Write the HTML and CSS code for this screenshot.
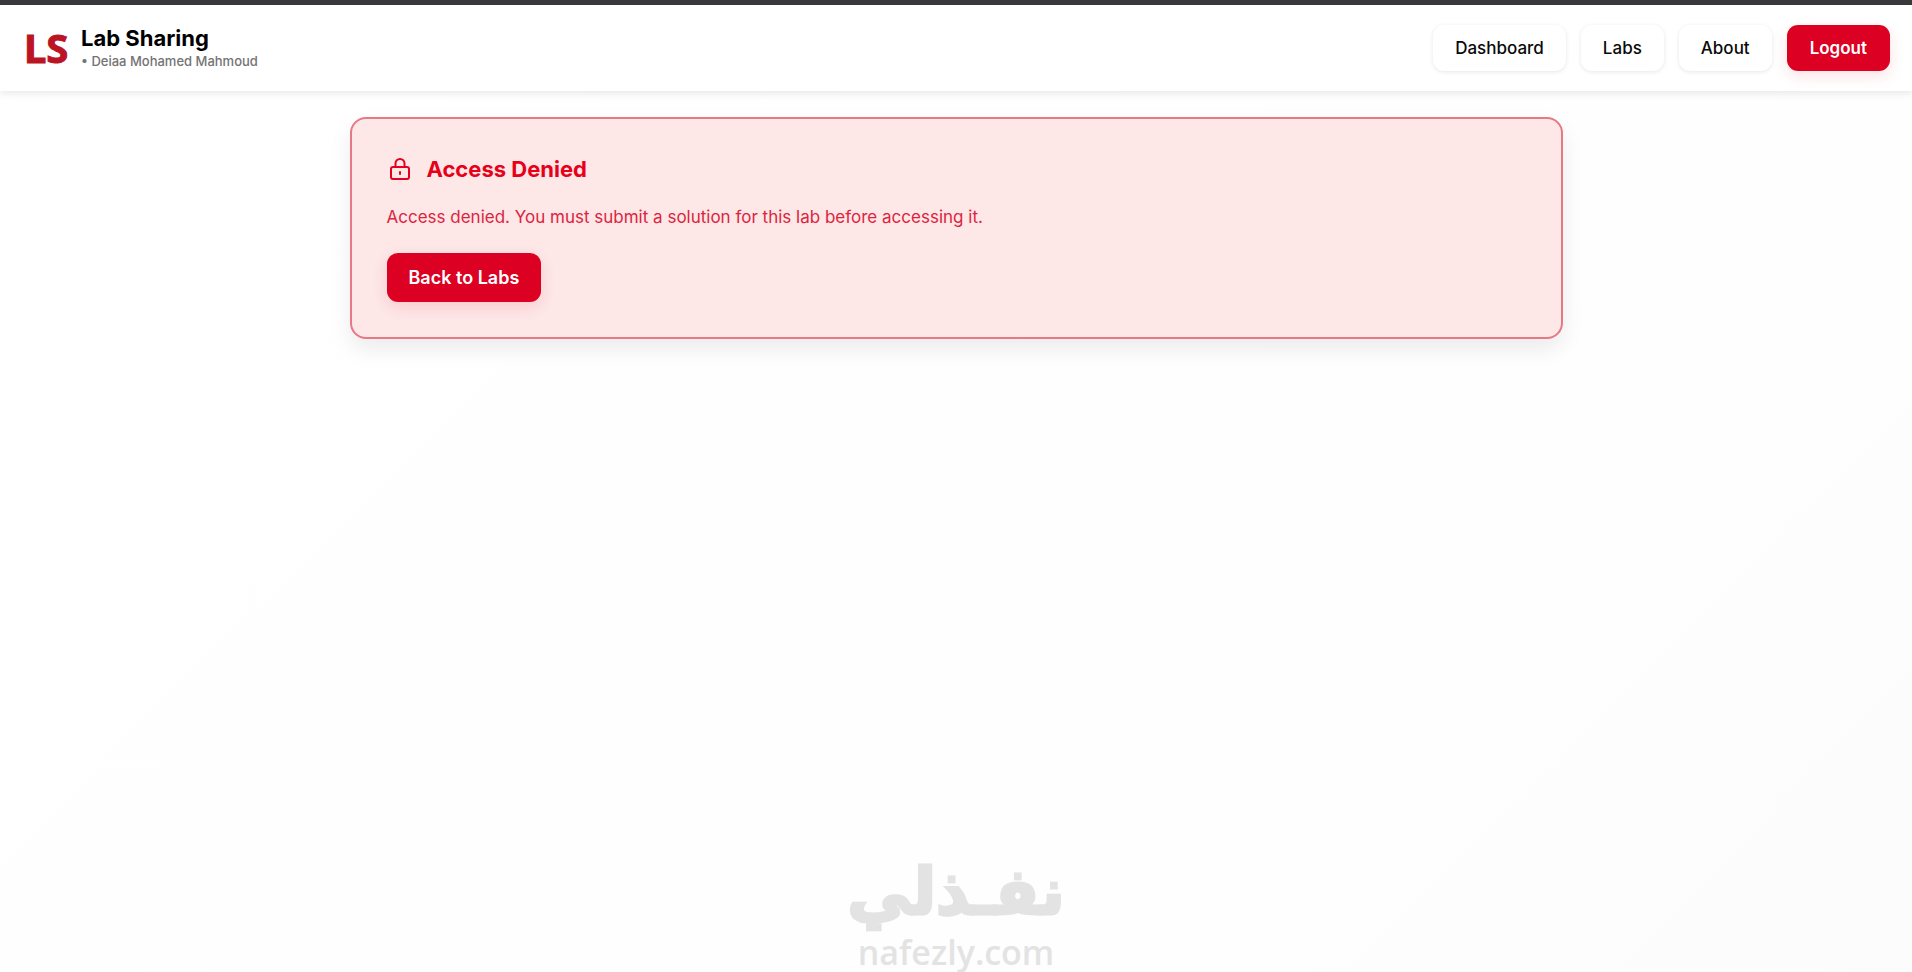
FILE: index.html
```html
<!DOCTYPE html>
<html lang="en">
<head>
    <meta charset="UTF-8">
    <meta name="viewport" content="width=device-width, initial-scale=1.0">
    <title>Lab Sharing</title>
    <link rel="stylesheet" href="styles.css">
</head>
<body>
    <header class="navbar">
        <div class="brand">
            <svg class="brand-logo" viewBox="0 0 42 46" role="img" aria-label="Lab Sharing logo">
                <text x="-3" y="38">LS</text>
            </svg>
            <div>
                <h1 class="brand-title">Lab Sharing</h1>
                <p class="brand-user">• Deiaa Mohamed Mahmoud</p>
            </div>
        </div>
        <nav class="nav-links">
            <a href="#" class="nav-link">Dashboard</a>
            <a href="#" class="nav-link">Labs</a>
            <a href="#" class="nav-link">About</a>
            <button type="button" class="btn btn-logout">Logout</button>
        </nav>
    </header>
    <main class="container">
        <section class="alert">
            <div class="alert-header">
                <svg class="alert-icon" viewBox="0 0 26 26" aria-hidden="true">
                    <rect x="4" y="11" width="18" height="12" rx="2"/>
                    <path d="M8.500 11V7.500a4.500 4.500 0 0 1 9 0V11"/>
                    <path d="M13 16v2"/>
                </svg>
                <h2 class="alert-title">Access Denied</h2>
            </div>
            <p class="alert-text">Access denied. You must submit a solution for this lab before accessing it.</p>
            <a href="#" class="btn btn-back">Back to Labs</a>
        </section>
    </main>
    <footer class="watermark">
        <span class="watermark-ar" lang="ar" dir="rtl">نفـذلي</span>
        <span class="watermark-en">nafezly.com</span>
    </footer>
</body>
</html>
```
FILE: styles.css
```css
* {
    box-sizing: border-box;
}
body {
    margin: 0;
    min-height: 100vh;
    display: flex;
    flex-direction: column;
    font-family: Inter, "Liberation Sans", sans-serif;
    font-size: 17px;
    line-height: 24px;
    color: #0a0a0a;
    background: linear-gradient(135deg, #ffffff 0%, #fefefe 70%, #fcfcfc 100%);
}
h1, h2, p {
    margin: 0;
}
.navbar {
    display: flex;
    justify-content: space-between;
    align-items: center;
    padding: 20px 22px;
    border-top: 5px solid #39393b;
    background: #fff;
    box-shadow: 0 2px 8px rgba(0, 0, 0, 0.1);
}
.brand {
    display: flex;
    align-items: center;
    gap: 12px;
    padding-left: 5px;
}
.brand-logo {
    width: 42px;
    height: 46px;
    overflow: visible;
}
.brand-logo text {
    font-family: "Noto Sans", sans-serif;
    font-size: 40px;
    font-weight: 700;
    fill: #bb1424;
    stroke: #bb1424;
}
.brand-title {
    font-size: 22px;
    line-height: 26px;
    font-weight: 700;
    color: #000;
}
.brand-user {
    font-size: 13px;
    line-height: 20px;
    font-weight: 500;
    color: #737373;
}
.nav-links {
    display: flex;
    gap: 15px;
}
.nav-link {
    padding: 11px 22px;
    border-radius: 11px;
    font-weight: 500;
    color: #0a0a0a;
    text-decoration: none;
    background: #fff;
    box-shadow: 0 1px 4px rgba(0, 0, 0, 0.1);
}
.btn {
    display: inline-block;
    border: none;
    border-radius: 11px;
    font: inherit;
    font-weight: 600;
    color: #fff;
    text-decoration: none;
    background: #dc0022;
    box-shadow: 0 5px 15px rgba(220, 0, 34, 0.12);
}
.btn-logout {
    padding: 11px 23px;
}
.btn-back {
    padding: 12px 22px;
    font-size: 18px;
    line-height: 25px;
}
.container {
    width: 100%;
    max-width: 1257px;
    margin: 0 auto;
    padding: 26px 22px;
}
.alert {
    padding: 34px 35px 35px;
    border: 2px solid #e77885;
    border-radius: 16px;
    background: #fde7e7;
    box-shadow: 0 10px 22px rgba(0, 0, 0, 0.08);
}
.alert-header {
    display: flex;
    align-items: center;
    gap: 14px;
    margin-bottom: 20px;
}
.alert-icon {
    width: 26px;
    height: 26px;
    fill: none;
    stroke: #e60020;
    stroke-width: 2;
    stroke-linecap: round;
    stroke-linejoin: round;
}
.alert-title {
    font-size: 22px;
    line-height: 32px;
    font-weight: 700;
    color: #e60019;
}
.alert-text {
    margin-bottom: 24px;
    color: #dc2440;
}
.watermark {
    display: flex;
    flex-direction: column;
    align-items: center;
    margin-top: auto;
    color: #e3e3e3;
}
.watermark-ar {
    font-family: "DejaVu Sans", sans-serif;
    font-size: 64px;
    line-height: 80px;
    font-weight: 700;
    -webkit-text-stroke: 3px #e3e3e3;
}
.watermark-en {
    font-family: "Open Sans", sans-serif;
    font-size: 34px;
    line-height: 40px;
    font-weight: 600;
}
```
